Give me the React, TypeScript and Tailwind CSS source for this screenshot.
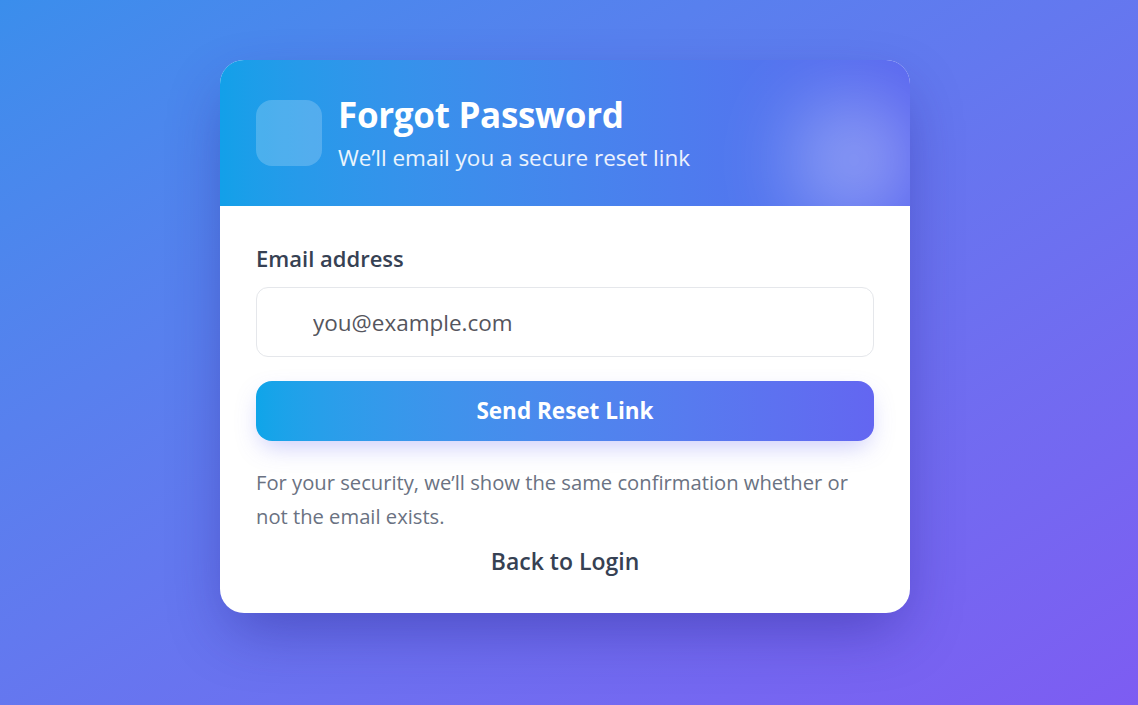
import React, { useState } from 'react';

const App: React.FC = () => {
  const [email, setEmail] = useState('');

  return (
    <div
      className="min-h-screen w-full bg-gradient-to-br from-[#3a8eec] to-[#7d5cf2] flex justify-center pr-2 pt-[60px]"
      style={{ fontFamily: '"Open Sans", "Noto Sans", sans-serif' }}
    >
      <div className="w-[690px] h-fit bg-white rounded-[24px] overflow-hidden shadow-[0_25px_60px_-10px_rgba(40,30,140,0.45)]">
        {/* 头部 */}
        <div className="relative h-[146px] overflow-hidden bg-gradient-to-r from-[#12a0e9] to-[#5a68f0] px-9 pt-10 flex gap-4">
          <div className="absolute top-10 -right-1 w-[120px] h-[120px] rounded-full bg-white/35 blur-2xl" />
          <div className="w-[66px] h-[66px] shrink-0 rounded-2xl bg-white/20" />
          <div className="relative -mt-[6px]">
            <h1 className="text-[35px] leading-[42px] font-bold text-white tracking-[-0.3px]">Forgot Password</h1>
            <p className="text-[22.5px] leading-[30px] text-white/90 mt-[7px]">We’ll email you a secure reset link</p>
          </div>
        </div>

        {/* 表单 */}
        <div className="px-9 pt-[38px] pb-[37px]">
          <label className="block text-[22px] leading-7 font-semibold text-gray-700 mb-[15px]">Email address</label>
          <input
            type="email"
            value={email}
            onChange={(e) => setEmail(e.target.value)}
            placeholder="you@example.com"
            className="w-full h-[70px] rounded-xl border border-gray-200 pl-14 pr-4 text-[22.5px] text-gray-800 placeholder:text-[#55555d] outline-none"
          />
          <button className="mt-6 w-full h-[60px] rounded-2xl bg-gradient-to-r from-[#0ea5e9] to-[#6366f1] text-white text-[22.5px] font-bold shadow-[0_10px_25px_-5px_rgba(99,102,241,0.35)]">
            Send Reset Link
          </button>
          <p className="mt-6 text-[20.2px] leading-[34px] text-gray-500">
            For your security, we’ll show the same confirmation whether or not the email exists.
          </p>
          <div className="mt-[14px] text-center">
            <a href="#" className="text-[23px] leading-7 font-semibold text-gray-700">Back to Login</a>
          </div>
        </div>
      </div>
    </div>
  );
};

export default App;
